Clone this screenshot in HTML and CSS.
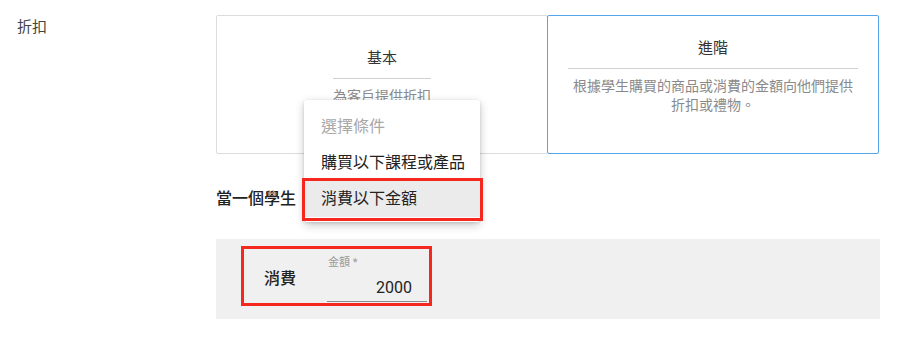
FILE: index.html
```html
<!DOCTYPE html>
<html lang="zh-Hant">
<head>
<meta charset="utf-8">
<link rel="stylesheet" href="styles.css">
</head>
<body>
<div class="page">
  <div class="label-col">折扣</div>
  <div class="main-col">
    <div class="cards">
      <div class="card card-basic">
        <div class="card-inner">
          <div class="card-title">基本</div>
          <div class="card-desc">為客戶提供折扣</div>
        </div>
      </div>
      <div class="card card-adv">
        <div class="card-inner">
          <div class="card-title">進階</div>
          <div class="card-desc">根據學生購買的商品或消費的金額向他們提供折扣或禮物。</div>
        </div>
      </div>
    </div>
    <div class="when-row">當一個學生</div>
    <div class="panel">
      <div class="field-box">
        <div class="field-name">消費</div>
        <div class="field">
          <div class="field-label">金額 *</div>
          <div class="field-input">2000</div>
        </div>
      </div>
    </div>
    <div class="menu">
      <div class="menu-item placeholder">選擇條件</div>
      <div class="menu-item">購買以下課程或產品</div>
      <div class="menu-item selected">消費以下金額</div>
      <div class="menu-mark"></div>
    </div>
  </div>
</div>
</body>
</html>
```

FILE: styles.css
```css
* { box-sizing: border-box; }
html, body { margin: 0; padding: 0; background: #fff; }
body {
  font-family: Roboto, "Noto Sans CJK TC", "Noto Sans", sans-serif;
  color: #333;
  width: 901px;
  height: 342px;
  overflow: hidden;
}
.page { display: flex; }
.label-col {
  width: 216px;
  padding: 15px 0 0 17px;
  font-size: 15px;
  line-height: 24px;
  color: #444;
}
.main-col {
  position: relative;
  width: 664px;
}
.cards {
  display: flex;
  margin-top: 15px;
  height: 139px;
}
.card {
  width: 332px;
  background: #fff;
  border: 1px solid #dcdcdc;
  border-radius: 2px;
  text-align: center;
  padding: 0 20px;
}
.card-basic { padding-top: 30px; }
.card-adv {
  margin-left: -1px;
  border-color: #55a3ea;
  padding-top: 20px;
  position: relative;
}
.card-inner {
  display: inline-block;
  text-align: center;
}
.card-title {
  font-size: 15px;
  line-height: 24px;
  color: #333;
  padding-bottom: 8px;
  border-bottom: 1px solid #d0d0d0;
}
.card-desc {
  margin-top: 8px;
  font-size: 14px;
  line-height: 19px;
  color: #8a8a8a;
}
.when-row {
  margin-top: 33px;
  font-size: 16px;
  line-height: 24px;
  font-weight: 500;
  color: #222;
}
.panel {
  margin-top: 28px;
  height: 80px;
  background: #f0f0f0;
  padding: 7px 0 0 25px;
}
.field-box {
  display: flex;
  width: 191px;
  height: 60px;
  border: 3px solid #f5271f;
  padding: 6px 0 0 20px;
}
.field-name {
  margin-top: 12px;
  font-size: 16px;
  line-height: 24px;
  font-weight: 500;
  color: #222;
  width: 63px;
}
.field {
  width: 100px;
  display: flex;
  flex-direction: column;
}
.field-label {
  font-size: 11px;
  line-height: 16px;
  color: #9a9a9a;
  padding-left: 1px;
}
.field-input {
  margin-top: 5px;
  height: 26px;
  font-size: 16px;
  line-height: 24px;
  text-align: right;
  padding-right: 15px;
  color: #222;
  border-bottom: 1px solid #8a8a8a;
}
.menu {
  position: absolute;
  left: 88px;
  top: 100px;
  width: 176px;
  padding: 9px 0 5px;
  background: #fff;
  border-radius: 3px;
  box-shadow: 0 3px 10px rgba(0, 0, 0, 0.22), 0 1px 3px rgba(0, 0, 0, 0.12);
}
.menu-item {
  height: 36px;
  line-height: 36px;
  padding-left: 17px;
  font-size: 16px;
  color: #222;
  white-space: nowrap;
}
.menu-item.placeholder { color: #a8a8a8; }
.menu-item.selected { background: #ebebeb; }
.menu-mark {
  position: absolute;
  left: -2px;
  top: 78px;
  width: 181px;
  height: 43px;
  border: 3px solid #f5271f;
}
```
